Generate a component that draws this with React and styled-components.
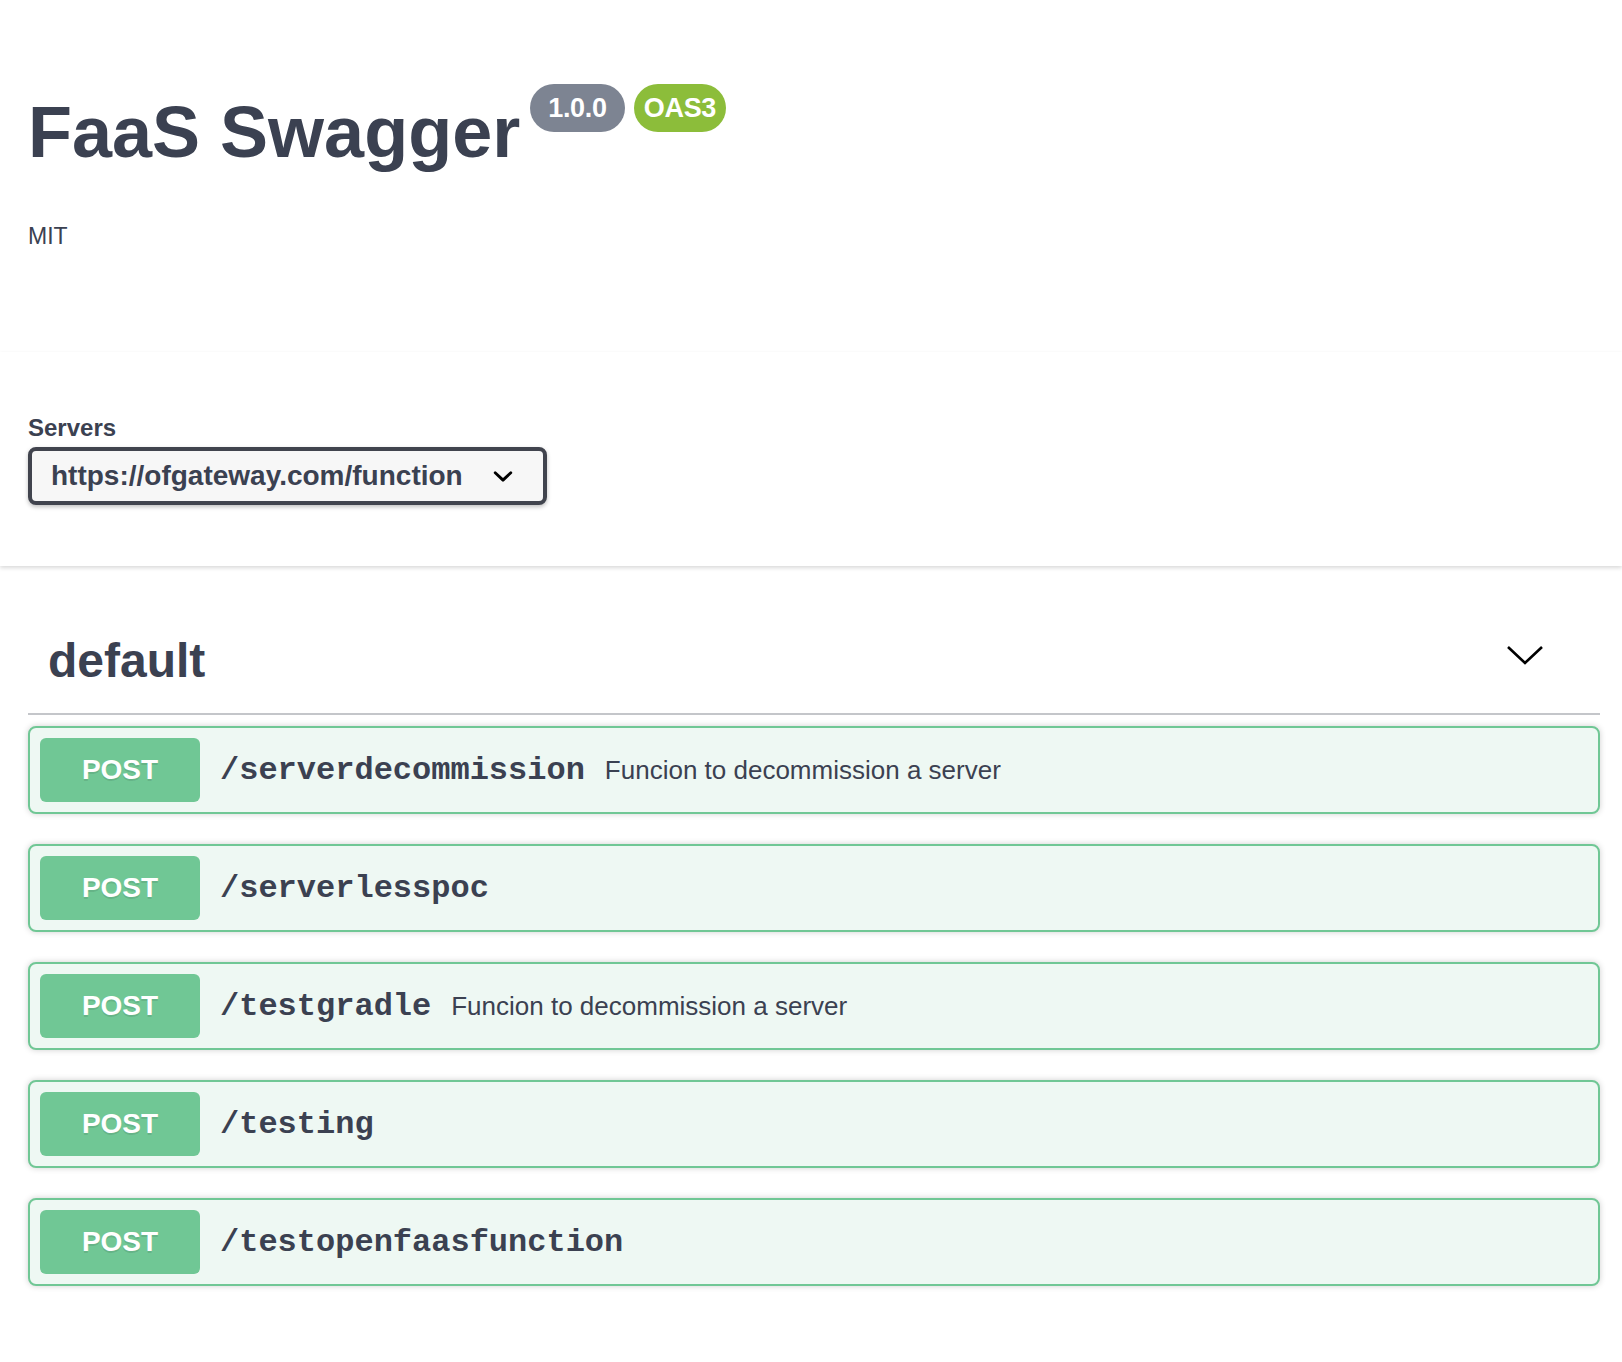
import React from "react";
import styled, { createGlobalStyle } from "styled-components";

const GlobalStyle = createGlobalStyle`
  html, body {
    margin: 0;
    padding: 0;
    background: #ffffff;
  }
  body {
    font-family: "Liberation Sans", Arial, Helvetica, sans-serif;
    color: #3b4151;
  }
  * { box-sizing: border-box; }
`;

const Page = styled.div`
  width: 100%;
  min-height: 1362px;
  background: #ffffff;
`;

const Wrapper = styled.div`
  padding: 0 22px 0 28px;
`;

const Info = styled.section`
  padding: 84px 0 102px;
`;

const TitleRow = styled.div`
  display: flex;
  align-items: flex-start;
`;

const Title = styled.h2`
  margin: 6px 0 0;
  font-size: 72px;
  line-height: 84px;
  font-weight: 700;
  color: #3b4151;
`;

const Badges = styled.div`
  display: flex;
  gap: 9px;
  margin-left: 10px;
`;

const Badge = styled.span`
  display: inline-flex;
  align-items: center;
  justify-content: center;
  height: 48px;
  padding: 0 ${(p) => p.$pad}px;
  border-radius: 57px;
  background: ${(p) => p.$bg};
  color: #ffffff;
  font-size: 27px;
  font-weight: 700;
  line-height: 1;
  letter-spacing: -0.3px;
`;

const License = styled.div`
  margin-top: 48px;
  font-size: 23px;
  line-height: 28px;
  color: #3b4151;
`;

const SchemeContainer = styled.section`
  background: #ffffff;
  box-shadow: 0 2px 4px 0 rgba(0, 0, 0, 0.15);
  padding: 62px 22px 61px 28px;
`;

const ServersLabel = styled.div`
  font-size: 24px;
  line-height: 28px;
  font-weight: 700;
  color: #3b4151;
  margin-bottom: 5px;
`;

const Select = styled.div`
  display: inline-flex;
  align-items: center;
  height: 58px;
  padding: 0 20px 0 19px;
  border: 4px solid #41444e;
  border-radius: 8px;
  background: #f7f7f7;
  box-shadow: 0 2px 4px 0 rgba(0, 0, 0, 0.25);
  font-size: 28px;
  font-weight: 700;
  color: #3b4151;
  gap: 20px;
`;

const SelectArrow = styled.svg`
  width: 40px;
  height: 40px;
  flex: none;
`;

const Operations = styled.section`
  margin-top: 40px;
`;

const TagHeading = styled.h3`
  display: flex;
  align-items: center;
  margin: 0 0 11px;
  padding: 27px 40px 24px 20px;
  border-bottom: 2px solid rgba(59, 65, 81, 0.3);
  font-size: 48px;
  line-height: 56px;
  font-weight: 700;
  color: #3b4151;
`;

const TagName = styled.span`
  flex: 1 1 auto;
`;

const ToggleButton = styled.button`
  display: flex;
  align-items: center;
  padding: 0;
  margin: 0 16px 12px 0;
  border: none;
  background: none;
  cursor: pointer;
`;

const OpList = styled.div`
  display: flex;
  flex-direction: column;
  gap: 30px;
`;

const OpBlock = styled.div`
  display: flex;
  align-items: center;
  padding: 10px;
  border: 2px solid #70c795;
  border-radius: 8px;
  background: #eef8f3;
  box-shadow: 0 0 6px rgba(0, 0, 0, 0.19);
`;

const Method = styled.span`
  flex: none;
  width: 160px;
  height: 64px;
  display: flex;
  align-items: center;
  justify-content: center;
  border-radius: 6px;
  background: #70c795;
  color: #ffffff;
  font-size: 28px;
  font-weight: 700;
  text-shadow: 0 2px 0 rgba(0, 0, 0, 0.1);
`;

const Path = styled.span`
  padding: 0 20px;
  font-family: "Liberation Mono", "Courier New", monospace;
  font-size: 32px;
  font-weight: 700;
  color: #3b4151;
`;

const Description = styled.span`
  font-size: 26px;
  color: #3b4151;
`;

const operations = [
  { path: "/serverdecommission", desc: "Funcion to decommission a server" },
  { path: "/serverlesspoc" },
  { path: "/testgradle", desc: "Funcion to decommission a server" },
  { path: "/testing" },
  { path: "/testopenfaasfunction" },
];

export default function App() {
  return (
    <Page>
      <GlobalStyle />
      <Wrapper>
        <Info>
          <TitleRow>
            <Title>FaaS Swagger</Title>
            <Badges>
              <Badge $bg="#7d8492" $pad={18}>1.0.0</Badge>
              <Badge $bg="#8cbd3a" $pad={10}>OAS3</Badge>
            </Badges>
          </TitleRow>
          <License>MIT</License>
        </Info>
      </Wrapper>
      <SchemeContainer>
        <ServersLabel>Servers</ServersLabel>
        <Select>
          <span>https://ofgateway.com/function</span>
          <SelectArrow viewBox="0 0 20 20">
            <path
              fill="#000"
              d="M13.418 7.859a.695.695 0 01.978 0 .68.68 0 010 .969l-3.908 3.83a.697.697 0 01-.979 0l-3.908-3.83a.68.68 0 010-.969.695.695 0 01.978 0L10 11l3.418-3.141z"
            />
          </SelectArrow>
        </Select>
      </SchemeContainer>
      <Wrapper>
        <Operations>
          <TagHeading>
            <TagName>default</TagName>
            <ToggleButton aria-label="Collapse operation">
              <svg width="38" height="22" viewBox="0 0 38 22">
                <path d="M2 3 L19 19 L36 3" fill="none" stroke="#000" strokeWidth="2.6" />
              </svg>
            </ToggleButton>
          </TagHeading>
          <OpList>
            {operations.map((op) => (
              <OpBlock key={op.path}>
                <Method>POST</Method>
                <Path>{op.path}</Path>
                {op.desc && <Description>{op.desc}</Description>}
              </OpBlock>
            ))}
          </OpList>
        </Operations>
      </Wrapper>
    </Page>
  );
}
